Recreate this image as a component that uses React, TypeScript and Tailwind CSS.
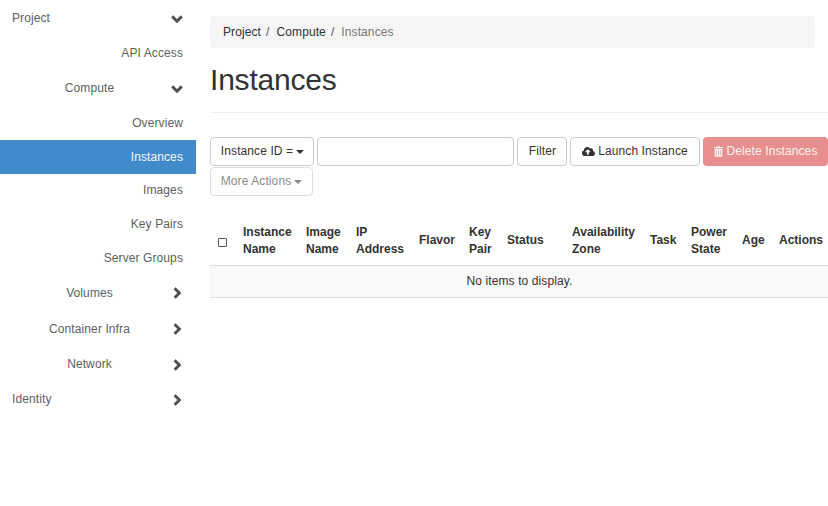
import { FaCloudUploadAlt, FaTrashAlt } from "react-icons/fa";

type NavItem = {
  label: string;
  level: 0 | 1 | 2;
  height: string;
  open?: boolean;
  active?: boolean;
};

const navItems: NavItem[] = [
  { label: "Project", level: 0, height: "h-[35px]", open: true },
  { label: "API Access", level: 2, height: "h-[35px]" },
  { label: "Compute", level: 1, height: "h-[35px]", open: true },
  { label: "Overview", level: 2, height: "h-[34px]" },
  { label: "Instances", level: 2, height: "h-[34px]", active: true },
  { label: "Images", level: 2, height: "h-[33px]" },
  { label: "Key Pairs", level: 2, height: "h-[34px]" },
  { label: "Server Groups", level: 2, height: "h-[34px]" },
  { label: "Volumes", level: 1, height: "h-[36px]" },
  { label: "Container Infra", level: 1, height: "h-[36px]" },
  { label: "Network", level: 1, height: "h-[35px]" },
  { label: "Identity", level: 0, height: "h-[35px]" },
];

const columns = [
  { label: "Instance Name", width: "w-[63px]" },
  { label: "Image Name", width: "w-[50px]" },
  { label: "IP Address", width: "w-[63px]" },
  { label: "Flavor", width: "w-[50px]" },
  { label: "Key Pair", width: "w-[38px]" },
  { label: "Status", width: "w-[65px]" },
  { label: "Availability Zone", width: "w-[78px]" },
  { label: "Task", width: "w-[41px]" },
  { label: "Power State", width: "w-[51px]" },
  { label: "Age", width: "w-[37px]" },
  { label: "Actions", width: "w-[57px]" },
];

function Caret({ className }: { className: string }) {
  return <span className={`ml-[3px] inline-block border-x-[4px] border-t-[4px] border-x-transparent ${className}`} />;
}

function Chevron({ open }: { open?: boolean }) {
  return (
    <svg viewBox="0 0 12 12" className="h-3 w-3 shrink-0 text-[#4d4d52]" fill="none" stroke="currentColor" strokeWidth="2.9">
      <path d={open ? "M1.2 3.4 6 8.2 10.8 3.4" : "M3.6 1.2 8.4 6 3.6 10.8"} />
    </svg>
  );
}

function SideNav() {
  return (
    <nav className="w-[196px] shrink-0 pt-px">
      {navItems.map((item) => (
        <a
          key={item.label}
          className={`flex items-center pr-[13px] ${item.height} ${
            item.active ? "bg-[#428bca] text-[#f2f7fb]" : "text-[#5e5e5e]"
          }`}
        >
          <span
            className={`flex-1 ${
              item.level === 0 ? "pl-3 text-left" : item.level === 1 ? "pl-2 text-center" : "text-right"
            }`}
          >
            {item.label}
          </span>
          {item.level !== 2 && <Chevron open={item.open} />}
        </a>
      ))}
    </nav>
  );
}

export default function App() {
  return (
    <div className="flex h-[506px] w-[828px] overflow-hidden bg-white font-['Liberation_Sans',Arial,sans-serif] text-xs leading-[17px] tracking-[0.1px] text-[#333]">
      <SideNav />

      <main className="min-w-0 flex-1 pl-[14px]">
        <ol className="mr-[13px] mt-4 flex h-8 items-center rounded bg-[#f5f5f5] px-[13px]">
          <li>Project</li>
          <li className="pl-[5px] pr-[7px] text-[#555]">/</li>
          <li>Compute</li>
          <li className="pl-[5px] pr-[7px] text-[#555]">/</li>
          <li className="text-[#777]">Instances</li>
        </ol>

        <h1 className="mt-[15px] text-[30px] leading-[33px] tracking-[-0.2px]">Instances</h1>
        <hr className="mt-4 border-[#eee]" />

        <div className="mt-6 flex gap-[3px]">
          <button className="flex h-[29px] w-[104px] items-center justify-center rounded border border-[#ccc] pl-px">
            Instance ID =<Caret className="border-t-[#333]" />
          </button>
          <input className="h-[29px] w-[197px] rounded border border-[#ccc]" />
          <button className="h-[29px] w-[50px] rounded border border-[#ccc] pl-px">Filter</button>
          <button className="flex h-[29px] w-[130px] items-center justify-center gap-[3px] rounded border border-[#ccc]">
            <FaCloudUploadAlt className="h-[13px] w-[13px]" />
            Launch Instance
          </button>
          <button className="flex h-[29px] w-[125px] items-center justify-center gap-1 rounded bg-[#e78f8e] text-[#fdf1f1]">
            <FaTrashAlt className="h-[11px] w-[9px]" />
            Delete Instances
          </button>
        </div>
        <button className="mt-px flex h-[29px] w-[103px] items-center justify-center rounded border border-[#ddd] text-[#8a8a8a]">
          More Actions<Caret className="border-t-[#8a8a8a]" />
        </button>

        <table className="mt-[18px] w-full table-fixed border-collapse">
          <thead>
            <tr className="h-[51px] border-b border-[#ddd]">
              <th className="w-[25px] px-2 pt-[3px] text-left">
                <span className="mt-[3px] block h-[9px] w-[9px] rounded-[1px] border border-[#555]" />
              </th>
              {columns.map((col) => (
                <th key={col.label} className={`px-2 pt-[3px] text-left font-bold tracking-normal ${col.width}`}>
                  {col.label}
                </th>
              ))}
            </tr>
          </thead>
          <tbody>
            <tr className="h-8 border-b border-[#ddd] bg-[#f9f9f9]">
              <td colSpan={12} className="pl-px text-center">
                No items to display.
              </td>
            </tr>
          </tbody>
        </table>
      </main>
    </div>
  );
}
